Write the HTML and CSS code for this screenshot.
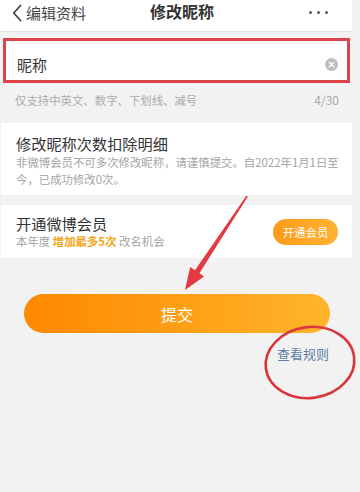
FILE: index.html
```html
<!DOCTYPE html>
<html lang="zh">
<head>
<meta charset="utf-8">
<link rel="stylesheet" href="styles.css">
</head>
<body>
<div class="page">
  <div class="app">
    <header class="topbar">
      <div class="back">
        <svg class="chev" width="10" height="18" viewBox="0 0 10 18"><path d="M8.5 1.5 L1.8 9 L8.5 16.5" fill="none" stroke="#444" stroke-width="1.8" stroke-linecap="round" stroke-linejoin="round"/></svg>
        <span>编辑资料</span>
      </div>
      <div class="title">修改昵称</div>
      <div class="more"><i></i><i></i><i></i></div>
    </header>

    <div class="inputbox">
      <span class="value">昵称</span>
      <span class="clear">
        <svg width="13" height="13" viewBox="0 0 13 13"><circle cx="6.5" cy="6.5" r="6.5" fill="#bdbdbd"/><path d="M4.3 4.3 L8.7 8.7 M8.7 4.3 L4.3 8.7" stroke="#fff" stroke-width="1.4" stroke-linecap="round"/></svg>
      </span>
    </div>

    <div class="hint">
      <span>仅支持中英文、数字、下划线、减号</span>
      <span class="count">4/30</span>
    </div>

    <section class="card detail">
      <div class="card-title">修改昵称次数扣除明细</div>
      <div class="card-desc">非微博会员不可多次修改昵称，请谨慎提交。自2022年1月1日至今，已成功修改0次。</div>
    </section>

    <section class="card vip">
      <div class="vip-text">
        <div class="card-title vip-title">开通微博会员</div>
        <div class="vip-sub">本年度 <b>增加最多5次</b> 改名机会</div>
      </div>
      <button class="vip-btn">开通会员</button>
    </section>

    <button class="submit">提交</button>

    <div class="rules-row"><a class="rules">查看规则</a></div>
  </div>

  <svg class="marks" width="360" height="492" viewBox="0 0 360 492">
    <polygon points="246.3,195.7 247.9,196.4 199.4,273.2 204,276.4 185,290 190.2,267 195,270.2" fill="#e23a40"/>
    <ellipse cx="310" cy="362.5" rx="44.5" ry="35.5" transform="rotate(-8 310 362.5)" fill="none" stroke="#d9363e" stroke-width="2.6"/>
  </svg>
</div>
</body>
</html>
```

FILE: styles.css
```css
* { box-sizing: border-box; }
html, body { margin: 0; padding: 0; }
body {
  background: #f2f2f2;
  font-family: "Noto Sans CJK SC", "Noto Sans", sans-serif;
  color: #333;
}
.page {
  position: relative;
  width: 360px;
  height: 492px;
  overflow: hidden;
}
.app {
  width: 352px;
  display: flex;
  flex-direction: column;
}
.topbar {
  height: 32px;
  background: #fff;
  border-bottom: 1px solid #e4e4e4;
  display: flex;
  align-items: center;
  position: relative;
  padding: 0 12px 0 12px;
}
.back {
  display: flex;
  align-items: center;
  gap: 4px;
  font-size: 15px;
  color: #444;
  line-height: 20px;
  margin-top: -6px;
}
.chev { display: block; }
.title {
  position: absolute;
  left: 0;
  right: 0;
  text-align: center;
  top: 1px;
  font-size: 16px;
  font-weight: 700;
  color: #333;
  line-height: 20px;
  pointer-events: none;
  padding-left: 12px;
}
.more {
  margin-left: auto;
  display: flex;
  gap: 5px;
  margin-right: 12px;
  margin-top: -6px;
}
.more i {
  width: 3px;
  height: 3px;
  border-radius: 50%;
  background: #555;
  display: block;
}
.inputbox {
  margin: 6px 2px 0 3px;
  height: 45px;
  border: 3px solid #dc4449;
  background: #fff;
  display: flex;
  align-items: center;
  padding: 0 9px 0 11px;
}
.inputbox .value {
  font-size: 15px;
  line-height: 20px;
  color: #333;
  margin-top: 8px;
}
.clear {
  margin-left: auto;
  display: flex;
  margin-top: 8px;
}
.hint {
  display: flex;
  justify-content: space-between;
  padding: 0 13px 0 15px;
  margin-top: 8px;
  font-size: 11.4px;
  line-height: 18px;
  color: #ababab;
}
.hint .count { font-size: 12px; }
.card {
  background: #fff;
  margin-left: 1px;
}
.detail {
  margin-top: 14px;
  padding: 10px 12px 7px 15px;
}
.card-title {
  font-size: 15.2px;
  line-height: 20px;
  color: #333;
}
.card-desc {
  font-size: 11.4px;
  line-height: 17px;
  color: #a3a3a3;
  margin-top: 1px;
}
.vip {
  margin-top: 10px;
  height: 53px;
  display: flex;
  align-items: center;
  padding: 0 14px 0 15px;
}
.vip-text { display: flex; flex-direction: column; gap: 1px; }
.vip-title { line-height: 18px; }
.vip-sub {
  font-size: 11.4px;
  color: #a3a3a3;
  line-height: 16px;
}
.vip-sub b { color: #f5a416; font-weight: 700; }
.vip-btn {
  margin-left: auto;
  width: 65px;
  height: 26px;
  border: none;
  border-radius: 13px;
  background: linear-gradient(90deg, #ff9a1a, #ffb233);
  color: #fff;
  font-family: inherit;
  font-size: 11.4px;
  padding: 0;
  margin-top: 1px;
}
.submit {
  margin: 36px 0 0 24px;
  width: 306px;
  height: 39px;
  border: none;
  border-radius: 20px;
  background: linear-gradient(90deg, #ff8800, #ffb52b);
  color: #fff;
  font-family: inherit;
  font-size: 16px;
  padding: 0;
}
.rules-row {
  display: flex;
  justify-content: flex-end;
  padding-right: 23px;
  margin-top: 12px;
}
.rules {
  font-size: 13px;
  line-height: 18px;
  color: #5f7ea6;
}
.marks {
  position: absolute;
  left: 0;
  top: 0;
  pointer-events: none;
}
```
